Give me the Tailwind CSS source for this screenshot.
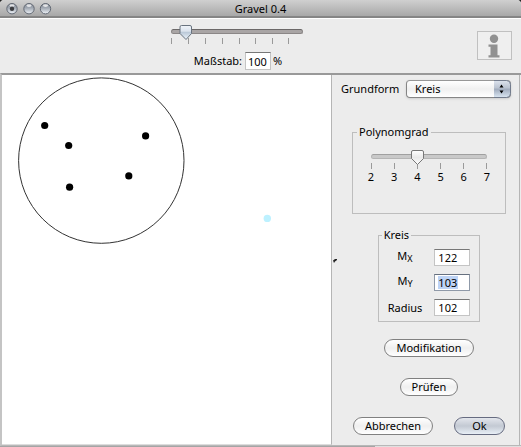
<!DOCTYPE html>
<html lang="de" class="bg-[#222]">
<head>
<meta charset="utf-8">
<meta name="viewport" content="width=device-width, initial-scale=1">
<title>Gravel 0.4</title>
<script src="https://cdn.jsdelivr.net/npm/@tailwindcss/browser@4"></script>
</head>
<body class="flex min-h-screen flex-col rounded-t-[4px] bg-[#ececec] font-['Noto_Sans','Open_Sans',sans-serif] text-[11px] leading-[14px] text-black">

<header class="relative flex h-[18px] shrink-0 items-center justify-center rounded-t-[4px] border-b-2 border-[#858585] bg-linear-to-b from-[#d0d0d0] to-[#a8a8a8] pt-px">
  <svg class="absolute top-[2px] left-[5px]" width="48" height="14" viewBox="0 0 48 14" aria-hidden="true">
    <defs>
      <linearGradient id="lamp" x1="0" y1="0" x2="0" y2="1">
        <stop offset="0" stop-color="#7e8590"/><stop offset=".45" stop-color="#a4abb5"/><stop offset="1" stop-color="#f0f4f9"/>
      </linearGradient>
    </defs>
    <g fill="url(#lamp)" stroke="#626873">
      <circle cx="7" cy="6.700" r="5.200"/><circle cx="24" cy="6.700" r="5.200"/><circle cx="40.500" cy="6.700" r="5.200"/>
    </g>
    <g fill="#fff" fill-opacity=".75"><ellipse cx="7" cy="3.600" rx="2.600" ry="1.300"/><ellipse cx="24" cy="3.600" rx="2.600" ry="1.300"/><ellipse cx="40.500" cy="3.600" rx="2.600" ry="1.300"/></g>
    <circle cx="7" cy="6.700" r="2.200" fill="#3c3d40"/>
  </svg>
  <h1>Gravel 0.4</h1>
</header>

<section class="grid shrink-0 grid-cols-[1fr_auto_1fr] border-t border-white pb-[3px]">
  <div></div>
  <div class="mr-12 flex flex-col items-center pt-[6px]">
    <div class="relative h-5 w-[132px]">
      <input id="zoom" type="range" min="0" max="800" value="90" aria-label="Maßstab" class="block h-3 w-full appearance-none bg-transparent [&::-webkit-slider-runnable-track]:h-[5px] [&::-webkit-slider-runnable-track]:rounded-full [&::-webkit-slider-runnable-track]:border [&::-webkit-slider-runnable-track]:border-[#8b8787] [&::-webkit-slider-runnable-track]:border-t-[#6b6868] [&::-webkit-slider-runnable-track]:bg-[#a9a5a5] [&::-webkit-slider-thumb]:h-3 [&::-webkit-slider-thumb]:w-3 [&::-webkit-slider-thumb]:appearance-none [&::-webkit-slider-thumb]:opacity-0">
      <svg class="pointer-events-none absolute inset-0" width="132" height="20" viewBox="0 0 132 20" aria-hidden="true">
        <defs><linearGradient id="blueThumb" x1="0" y1="0" x2="0" y2="1"><stop offset="0" stop-color="#f1f5fa"/><stop offset=".4" stop-color="#dbe3ed"/><stop offset=".5" stop-color="#bccad9"/><stop offset="1" stop-color="#edf5fc"/></linearGradient></defs>
        <path d="M.5 13v6M17.500 13v6M34.500 13v6M51.500 13v6M68.500 13v6M84.500 13v6M101.500 13v6M117.500 13v6" stroke="#9a9a9a"/>
        <path d="M10.500 .5h8.500q1.500 0 1.500 1.500v6.500L15 14.500 9 8.500V2q0-1.500 1.500-1.500z" fill="url(#blueThumb)" stroke="#69737f"/>
      </svg>
    </div>
    <div class="mt-[7px] flex items-center pl-[3px]">
      <label for="scale" class="mr-[3px]">Maßstab:</label>
      <input id="scale" value="100" class="h-[18px] w-[26px] border border-[#c4c4c4] border-t-[#777] bg-white px-[2px]">
      <span class="ml-[2px]">%</span>
    </div>
  </div>
  <div class="flex justify-end pt-3 pr-[9px]">
    <button type="button" aria-label="Info" class="flex h-[29px] w-[35px] items-center justify-center border border-[#c0c0c0] bg-[#efefef] pr-[2px]">
      <svg width="12" height="24" viewBox="0 0 12 24" fill="#919191" aria-hidden="true"><circle cx="6" cy="4.700" r="4.200"/><path d="M.5 10.500h9v10.800h2V23.500H.5v-2.200h2v-8.600h-2z"/></svg>
    </button>
  </div>
</section>

<main class="flex flex-1 border-t-2 border-b border-l-2 border-[#999] border-b-[#b8b8b8] border-l-[#c4c4c4]">
  <section class="min-w-0 flex-1 border-r border-b border-[#b5b5b5] border-b-[#ddd] bg-white">
    <svg class="block" width="300" height="180" viewBox="2 75 300 180" role="img" aria-label="Kreis">
      <circle cx="101.300" cy="160.600" r="82.700" fill="none" stroke="#333"/>
      <g><circle cx="44.700" cy="125.500" r="3.600"/><circle cx="68.700" cy="145.500" r="3.600"/><circle cx="145.600" cy="135.900" r="3.600"/><circle cx="128.800" cy="175.900" r="3.600"/><circle cx="69.600" cy="187.200" r="3.600"/></g>
      <circle cx="267.300" cy="218.400" r="3.700" fill="#bdf1ff"/>
    </svg>
  </section>

  <div class="flex w-[7px] shrink-0 items-center justify-center">
    <svg width="5" height="5" viewBox="0 0 5 5" aria-hidden="true"><path d="M0 2.500 2 1h2v1L2 3.500 1 5z" fill="#222"/></svg>
  </div>

  <form class="flex w-[181px] shrink-0 flex-col items-center border-r border-[#b5b5b5] pt-[5px] pb-[7px]">
    <div class="flex w-full items-center justify-between pr-[8px] pl-[2px]">
      <label for="shape">Grundform</label>
      <div class="relative">
        <select id="shape" class="block h-[18px] w-[105px] appearance-none rounded-[4px] border border-[#858585] border-t-[#979797] bg-linear-to-b from-white via-[#f0f0f0] to-white px-2 leading-[14px] shadow-sm">
          <option>Kreis</option>
        </select>
        <svg class="pointer-events-none absolute top-0 right-0" width="17" height="18" viewBox="0 0 17 18" aria-hidden="true">
          <defs><linearGradient id="cap" x1="0" y1="0" x2="0" y2="1"><stop offset="0" stop-color="#dde3ed"/><stop offset=".45" stop-color="#b9c2d0"/><stop offset=".5" stop-color="#9faabc"/><stop offset="1" stop-color="#dbe7f3"/></linearGradient></defs>
          <path d="M0 .5h12.500q4 0 4 4v9q0 4-4 4H0z" fill="url(#cap)"/>
          <path d="M0 .5h12.500q4 0 4 4v9q0 4-4 4H0" fill="none" stroke="#737c8d"/>
          <path d="M5.500 7.500 7.500 4.500 9.500 7.500zM5.500 10.500 7.500 13.500 9.500 10.500z"/>
        </svg>
      </div>
    </div>

    <fieldset class="mt-[27px] h-[89px] w-[154px] border border-[#bdbdbd] px-[13px] pt-[11px]">
      <legend class="-ml-[9px] px-[2px]">Polynomgrad</legend>
      <div class="relative mx-[5px] h-5">
        <input id="degree" type="range" min="2" max="7" value="4" aria-label="Polynomgrad" class="block h-3 w-full appearance-none bg-transparent [&::-webkit-slider-runnable-track]:h-[5px] [&::-webkit-slider-runnable-track]:rounded-full [&::-webkit-slider-runnable-track]:border [&::-webkit-slider-runnable-track]:border-[#b5b5b5] [&::-webkit-slider-runnable-track]:border-t-[#a0a0a0] [&::-webkit-slider-runnable-track]:bg-[#c9c9c9] [&::-webkit-slider-thumb]:h-3 [&::-webkit-slider-thumb]:w-3 [&::-webkit-slider-thumb]:appearance-none [&::-webkit-slider-thumb]:opacity-0">
        <svg class="pointer-events-none absolute inset-0" width="116" height="21" viewBox="0 0 116 21" aria-hidden="true">
          <defs><linearGradient id="grayThumb" x1="0" y1="0" x2="0" y2="1"><stop offset="0" stop-color="#fff"/><stop offset=".5" stop-color="#e9e9e9"/><stop offset="1" stop-color="#fff"/></linearGradient></defs>
          <path d="M.5 13v6M23.500 13v6M46.500 13v6M69.500 13v6M92.500 13v6M115.500 13v6" stroke="#9a9a9a"/>
          <path d="M42 .5h9q1.500 0 1.500 1.500V8.500L46.500 14.500 40.500 8.500V2Q40.500 .5 42 .5z" fill="url(#grayThumb)" stroke="#777"/>
        </svg>
      </div>
      <div class="flex justify-between">
        <span class="w-[10px] text-center">2</span><span class="w-[10px] text-center">3</span><span class="w-[10px] text-center">4</span><span class="w-[10px] text-center">5</span><span class="w-[10px] text-center">6</span><span class="w-[10px] text-center">7</span>
      </div>
    </fieldset>

    <fieldset class="mt-[14px] h-[94px] w-[102px] border border-[#bdbdbd] px-[9px] pt-[7px]">
      <legend class="-ml-[6px] px-[2px]">Kreis</legend>
      <div class="grid grid-cols-[1fr_36px] items-center gap-x-3 gap-y-[8px] text-center">
        <label for="mx" class="-mt-1">M<sub class="text-[9px]">X</sub></label>
        <input id="mx" value="122" class="h-[17px] w-full border border-[#c4c4c4] border-t-[#777] bg-white px-[3px]">
        <label for="my" class="-mt-1">M<sub class="text-[9px]">Y</sub></label>
        <div class="flex h-[17px] items-center border border-[#8f99a8] border-t-[#66707f] bg-white px-[3px]">
          <input id="my" value="103" class="h-[13px] w-5 bg-[#bdd3f5]">
        </div>
        <label for="radius">Radius</label>
        <input id="radius" value="102" class="h-[17px] w-full border border-[#c4c4c4] border-t-[#777] bg-white px-[3px]">
      </div>
    </fieldset>

    <button type="button" class="mt-[17px] h-[18px] w-[90px] rounded-full border border-[#808080] bg-linear-to-b from-white via-[#efefef] to-white">Modifikation</button>
    <button type="button" class="mt-[21px] h-[18px] w-[58px] rounded-full border border-[#808080] bg-linear-to-b from-white via-[#efefef] to-white">Prüfen</button>
    <div class="mt-[21px] flex w-full justify-between pr-[14px] pl-[14px]">
      <button type="button" class="h-[18px] w-[80px] rounded-full border border-[#808080] bg-linear-to-b from-white via-[#efefef] to-white">Abbrechen</button>
      <button type="submit" class="h-[18px] w-[51px] rounded-full border border-[#666b80] bg-linear-to-b from-[#e3e6ec] via-[#c3c9d3] to-[#e8eff6]">Ok</button>
    </div>
  </form>
  <div class="w-px shrink-0"></div>
</main>
<div class="h-px shrink-0 bg-[#e0e0e0]"><div class="h-px w-[72%] bg-[#a5a5a5]"></div></div>
</body>
</html>
